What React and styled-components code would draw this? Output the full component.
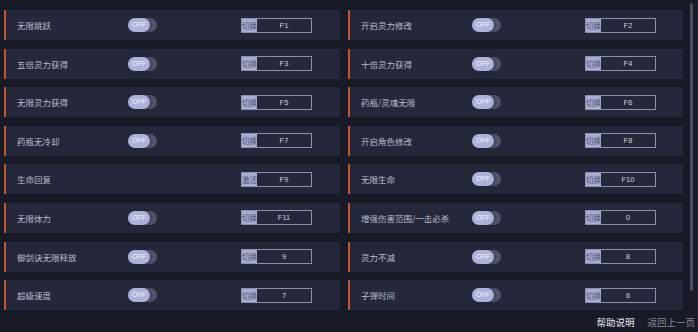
import React from 'react'
import styled, { createGlobalStyle } from 'styled-components'

const GlobalStyle = createGlobalStyle`
  html, body {
    margin: 0;
    padding: 0;
    background: #181a28;
  }
  body {
    font-family: "Noto Sans CJK SC", "Noto Sans", sans-serif;
    overflow: hidden;
  }
`

const left = [
  { name: '无限跳跃', key: 'F1' },
  { name: '五倍灵力获得', key: 'F3' },
  { name: '无限灵力获得', key: 'F5' },
  { name: '药瓶无冷却', key: 'F7' },
  { name: '生命回复', key: 'F9', noToggle: true, action: '激活' },
  { name: '无限体力', key: 'F11' },
  { name: '御剑诀无限释放', key: '9' },
  { name: '超级速度', key: '7' },
]

const right = [
  { name: '开启灵力修改', key: 'F2' },
  { name: '十倍灵力获得', key: 'F4' },
  { name: '药瓶/灵魂无限', key: 'F6' },
  { name: '开启角色修改', key: 'F8' },
  { name: '无限生命', key: 'F10' },
  { name: '增强伤害范围/一击必杀', key: '0' },
  { name: '灵力不减', key: '8' },
  { name: '子弹时间', key: '6' },
]

function Toggle() {
  return (
    <Track>
      <Knob>OFF</Knob>
    </Track>
  )
}

function HotKey({ action = '切换', value }) {
  return (
    <KeyBox>
      <KeyTag>{action}</KeyTag>
      <KeyValue>{value}</KeyValue>
    </KeyBox>
  )
}

function CheatRow({ item }) {
  return (
    <Row>
      <Label>{item.name}</Label>
      <ToggleCell>{!item.noToggle && <Toggle />}</ToggleCell>
      <HotKey action={item.action} value={item.key} />
    </Row>
  )
}

function App() {
  const rows = []
  left.forEach((l, i) => {
    rows.push(<CheatRow key={'l' + i} item={l} />)
    rows.push(<CheatRow key={'r' + i} item={right[i]} />)
  })

  return (
    <>
      <GlobalStyle />
      <Page>
        <Main>
          <Grid>{rows}</Grid>
          <ScrollBar />
        </Main>
        <Footer>
          <FooterLink $active>帮助说明</FooterLink>
          <FooterLink>返回上一页</FooterLink>
        </Footer>
      </Page>
    </>
  )
}

const Page = styled.div`
  width: 698px;
  height: 332px;
  background: #181a28;
  overflow: hidden;
`

const Main = styled.div`
  display: flex;
  align-items: flex-start;
  padding: 10px 0 0 4px;
`

const Grid = styled.div`
  display: grid;
  grid-template-columns: 336px 335px;
  grid-auto-rows: 30px;
  column-gap: 8px;
  row-gap: 8.6px;
`

const ScrollBar = styled.div`
  width: 3px;
  height: 288px;
  margin-top: -7px;
  margin-left: 7px;
  border-radius: 2px;
  background: #4a4d62;
`

const Row = styled.div`
  display: flex;
  align-items: center;
  background: #25273a;
  border-left: 2px solid #c4562c;
  padding-left: 11px;
`

const Label = styled.div`
  width: 111px;
  font-size: 8.5px;
  color: #bcbecd;
  white-space: nowrap;
`

const ToggleCell = styled.div`
  width: 113px;
  display: flex;
  align-items: center;
`

const Track = styled.div`
  width: 29px;
  height: 14px;
  border-radius: 7px;
  background: #50536a;
  display: flex;
`

const Knob = styled.div`
  width: 22px;
  height: 14px;
  border-radius: 7px;
  background: #aeb2da;
  color: #f2f3fa;
  font-family: "Liberation Sans", sans-serif;
  font-size: 7px;
  line-height: 14px;
  text-align: center;
  box-shadow: 1px 0 2px rgba(0, 0, 0, 0.35);
`

const KeyBox = styled.div`
  width: 71px;
  height: 15px;
  box-sizing: border-box;
  border: 1px solid #8e91a8;
  display: flex;
  align-items: stretch;
`

const KeyTag = styled.div`
  width: 15px;
  background: #a9add4;
  color: #4b4d68;
  font-size: 7.5px;
  line-height: 13px;
  text-align: center;
  white-space: nowrap;
  overflow: hidden;
`

const KeyValue = styled.div`
  flex: 1;
  color: #d0d2de;
  font-family: "Liberation Sans", sans-serif;
  font-size: 7.5px;
  line-height: 13px;
  text-align: center;
`

const Footer = styled.div`
  display: flex;
  justify-content: flex-end;
  gap: 13px;
  padding-right: 3px;
  margin-top: 5px;
`

const FooterLink = styled.span`
  font-size: 9.5px;
  line-height: 14px;
  color: ${p => (p.$active ? '#e6e7ef' : '#8a8c9e')};
  cursor: pointer;
`

export default App
